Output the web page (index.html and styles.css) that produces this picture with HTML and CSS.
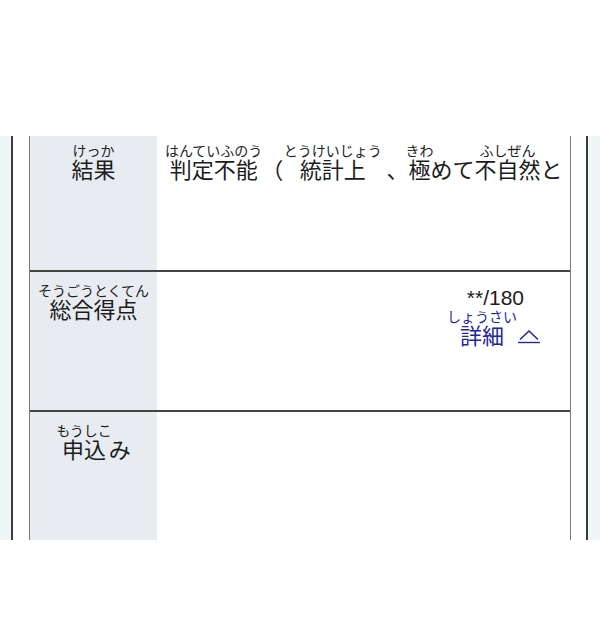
FILE: index.html
```html
<!DOCTYPE html>
<html lang="ja">
<head>
<meta charset="utf-8">
<title>結果</title>
<link rel="stylesheet" href="styles.css">
</head>
<body>
<div class="frame">
  <div class="edge"></div>
  <div class="rail"></div>
  <div class="gap-l"></div>
  <div class="table">
    <div class="row row-result">
      <div class="label"><ruby>結果<rt>けっか</rt></ruby></div>
      <div class="value value-text"><ruby>判定不能<rt>はんていふのう</rt></ruby>（<ruby class="spaced">統計上<rt>とうけいじょう</rt></ruby>、<ruby>極<rt>きわ</rt></ruby>めて<ruby>不自然<rt>ふしぜん</rt></ruby>と</div>
    </div>
    <div class="row row-score">
      <div class="label"><ruby>総合得点<rt>そうごうとくてん</rt></ruby></div>
      <div class="value value-score">
        <div class="score">**/180</div>
        <a class="detail" href="#"><ruby>詳細<rt>しょうさい</rt></ruby><svg class="caret" width="24" height="15" viewBox="0 0 24 15"><polyline points="3,10.5 12,2 21,10.5" fill="none" stroke="currentColor" stroke-width="1.6"/><line x1="1" y1="13.5" x2="23" y2="13.5" stroke="currentColor" stroke-width="1.4"/></svg></a>
      </div>
    </div>
    <div class="row row-apply">
      <div class="label"><ruby>申込<rt>もうしこ</rt></ruby>み</div>
      <div class="value"></div>
    </div>
  </div>
  <div class="gap-r"></div>
  <div class="rail"></div>
  <div class="edge edge-r"></div>
</div>
</body>
</html>
```

FILE: styles.css
```css
html, body {
  margin: 0;
  padding: 0;
  background: #ffffff;
}

body {
  font-family: "Noto Sans CJK JP", "Noto Sans", sans-serif;
  color: #1c1c1c;
}

.frame {
  margin-top: 136px;
  height: 404px;
  display: flex;
  overflow: hidden;
}

.edge {
  width: 11px;
  background: #eef6f8;
}

.edge-r {
  width: 12px;
}

.rail {
  width: 2px;
  background: #3c3c3c;
}

.gap-l {
  width: 16px;
}

.gap-r {
  width: 15px;
}

.table {
  width: 540px;
  border-left: 1px solid #7a7a7a;
  border-right: 1px solid #7a7a7a;
  display: grid;
  grid-template-rows: 134px 138px 128px;
  row-gap: 2px;
  background: #444444;
}

.row {
  display: grid;
  grid-template-columns: 127px 1fr;
  background: #ffffff;
}

.label {
  background: #e8ecf0;
  text-align: center;
  font-size: 22px;
  line-height: 24px;
  padding-top: 24px;
}

.row-result .label,
.row-result .value {
  padding-top: 20px;
}

ruby {
  ruby-position: over;
  ruby-align: center;
}

rt {
  font-size: 14px;
  line-height: 18px;
  color: #222222;
  ruby-align: center;
}

.spaced {
  margin-left: 6px;
  margin-right: 10px;
}

.value {
  font-size: 22px;
  line-height: 24px;
  padding-top: 24px;
  min-width: 0;
}

.value-text {
  padding-left: 8px;
  white-space: nowrap;
  overflow: hidden;
}

.value-score {
  display: flex;
  flex-direction: column;
  align-items: flex-end;
  padding-right: 29px;
  padding-top: 14px;
}

.score {
  font-family: "Liberation Sans", Arial, sans-serif;
  font-size: 21px;
  line-height: 24px;
  margin-right: 17px;
}

.detail {
  margin-top: -1px;
  color: #25259e;
  text-decoration: none;
  display: flex;
  align-items: flex-end;
  gap: 0;
}

.detail rt {
  color: #25259e;
}

.caret {
  display: block;
  margin-bottom: 2px;
}
```
